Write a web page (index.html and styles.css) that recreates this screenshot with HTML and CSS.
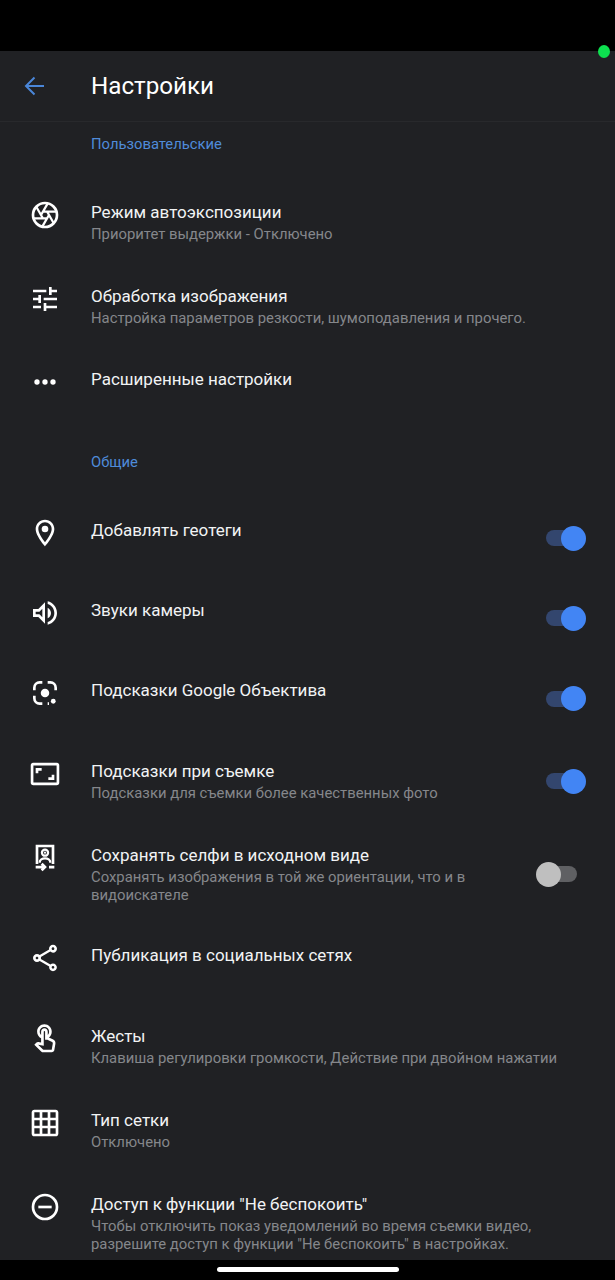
FILE: index.html
```html
<!DOCTYPE html>
<html lang="ru">
<head>
    <meta charset="UTF-8">
    <meta name="viewport" content="width=device-width, initial-scale=1.0">
    <title>Настройки</title>
    <link rel="stylesheet" href="styles.css">
</head>
<body>
    <div class="status-bar"></div>
    <span class="camera-dot"></span>

    <header class="toolbar">
        <svg class="back" viewBox="0 0 24 24"><path d="M21 12H4M11.500 3.500L3 12l8.500 8.500"/></svg>
        <h1>Настройки</h1>
    </header>

    <main class="list">
        <h2 class="section first">Пользовательские</h2>

        <div class="row">
            <svg class="icon" viewBox="0 0 24 24"><circle class="line" cx="12" cy="12" r="9"/><path class="line thin" d="M10.500 9.400H20.600M13.500 9.400L18.550 18.150M15 12L9.950 20.750M13.500 14.600H3.400M10.500 14.600L5.450 5.850M9 12L14.050 3.250"/></svg>
            <div class="text">
                <div class="name">Режим автоэкспозиции</div>
                <div class="sub">Приоритет выдержки - Отключено</div>
            </div>
        </div>

        <div class="row short">
            <svg class="icon" viewBox="0 0 24 24"><path d="M3 17v2h6v-2H3zM3 5v2h10V5H3zm10 16v-2h8v-2h-8v-2h-2v6h2zM7 9v2H3v2h4v2h2V9H7zm14 4v-2H11v2h10zm-6-4h2V7h4V5h-4V3h-2v6z"/></svg>
            <div class="text">
                <div class="name">Обработка изображения</div>
                <div class="sub">Настройка параметров резкости, шумоподавления и прочего.</div>
            </div>
        </div>

        <div class="row wide">
            <svg class="icon" viewBox="0 0 24 24"><circle cx="6" cy="12" r="2"/><circle cx="12" cy="12" r="2"/><circle cx="18" cy="12" r="2"/></svg>
            <div class="text">
                <div class="name">Расширенные настройки</div>
            </div>
        </div>

        <h2 class="section">Общие</h2>

        <div class="row">
            <svg class="icon" viewBox="0 0 24 24"><path d="M12 2C8.130 2 5 5.130 5 9c0 5.250 7 13 7 13s7-7.750 7-13c0-3.870-3.130-7-7-7zM7 9c0-2.760 2.240-5 5-5s5 2.240 5 5c0 2.880-2.880 7.190-5 9.880C9.920 16.210 7 11.850 7 9z"/><circle cx="12" cy="9" r="2.500"/></svg>
            <div class="text">
                <div class="name">Добавлять геотеги</div>
            </div>
            <div class="switch on"><span class="track"></span><span class="thumb"></span></div>
        </div>

        <div class="row">
            <svg class="icon" viewBox="0 0 24 24"><path d="M3 9v6h4l5 5V4L7 9H3zm7-.170v6.340L7.830 13H5v-2h2.830L10 8.830zM16.500 12c0-1.770-1.020-3.290-2.500-4.030v8.050c1.480-.730 2.500-2.250 2.500-4.020zM14 3.230v2.060c2.890.860 5 3.540 5 6.710s-2.110 5.850-5 6.710v2.060c4.010-.910 7-4.490 7-8.770 0-4.280-2.990-7.860-7-8.770z"/></svg>
            <div class="text">
                <div class="name">Звуки камеры</div>
            </div>
            <div class="switch on"><span class="track"></span><span class="thumb"></span></div>
        </div>

        <div class="row wide">
            <svg class="icon" viewBox="0 0 24 24"><path class="line" d="M4 10V8a4 4 0 0 1 4-4h2M14 4h2a4 4 0 0 1 4 4v2M4 14v2a4 4 0 0 0 4 4h2M14 20h1"/><circle cx="12" cy="12" r="3.200"/><circle cx="18.200" cy="18.200" r="1.800"/></svg>
            <div class="text">
                <div class="name">Подсказки Google Объектива</div>
            </div>
            <div class="switch on"><span class="track"></span><span class="thumb"></span></div>
        </div>

        <div class="row">
            <svg class="icon" viewBox="0 0 24 24"><rect class="line" x="2.300" y="4.600" width="19.400" height="14.800" rx="1"/><path class="line" d="M6 11.500V8.500h3.500M18 12.500v3h-3.500"/></svg>
            <div class="text">
                <div class="name">Подсказки при съемке</div>
                <div class="sub">Подсказки для съемки более качественных фото</div>
            </div>
            <div class="switch on"><span class="track"></span><span class="thumb"></span></div>
        </div>

        <div class="row wrap">
            <svg class="icon" viewBox="0 0 24 24"><path class="line" d="M6 16.500V3h12v13.500"/><circle class="line thin" cx="12" cy="8" r="2.300"/><circle cx="12" cy="8" r=".800"/><path class="line thin" d="M8 15.500c0-2 2-3.300 4-3.300s4 1.300 4 3.300"/><path class="line" d="M5 18.800h7M9.500 16.300l2.500 2.500-2.500 2.500M15 18.800h4"/></svg>
            <div class="text">
                <div class="name">Сохранять селфи в исходном виде</div>
                <div class="sub">Сохранять изображения в той же ориентации, что и в видоискателе</div>
            </div>
            <div class="switch"><span class="track"></span><span class="thumb"></span></div>
        </div>

        <div class="row wide">
            <svg class="icon" viewBox="0 0 24 24"><path d="M18 16.080c-.760 0-1.440.300-1.960.770L8.910 12.700c.050-.230.090-.460.090-.700s-.040-.470-.090-.700l7.050-4.110c.540.500 1.250.810 2.040.810 1.660 0 3-1.340 3-3s-1.340-3-3-3-3 1.340-3 3c0 .240.040.470.090.700L8.040 9.810C7.500 9.310 6.790 9 6 9c-1.660 0-3 1.340-3 3s1.340 3 3 3c.790 0 1.500-.310 2.040-.810l7.120 4.160c-.050.210-.080.430-.080.650 0 1.610 1.310 2.920 2.920 2.920s2.920-1.310 2.920-2.920-1.310-2.920-2.920-2.920zM18 4c.550 0 1 .450 1 1s-.450 1-1 1-1-.450-1-1 .450-1 1-1zM6 13c-.550 0-1-.450-1-1s.450-1 1-1 1 .450 1 1-.450 1-1 1zm12 7.020c-.550 0-1-.450-1-1s.450-1 1-1 1 .450 1 1-.450 1-1 1z"/></svg>
            <div class="text">
                <div class="name">Публикация в социальных сетях</div>
            </div>
        </div>

        <div class="row">
            <svg class="icon" viewBox="0 0 24 24"><path d="M18.190 12.440l-3.240-1.620c1.290-1 2.120-2.560 2.120-4.320C17.070 3.470 14.600 1 11.570 1S6.070 3.470 6.070 6.500c0 2.130 1.220 3.980 3 4.890v3.260c-2.150-.460-2.020-.440-2.260-.440-.530 0-1.030.210-1.410.590L4 16.220l5.090 5.090c.430.440 1.030.690 1.650.690h6.300c.980 0 1.810-.700 1.970-1.670l.800-4.710c.220-1.300-.430-2.580-1.620-3.180zm-.350 2.850l-.800 4.710h-6.300c-.090 0-.170-.040-.240-.100l-3.680-3.680 4.250.890V6.500c0-.280.220-.500.500-.500s.500.220.500.500v6h1.760l3.460 1.730c.400.200.620.630.550 1.060zM8.070 6.500c0-1.930 1.570-3.500 3.500-3.500s3.500 1.570 3.500 3.500c0 .950-.380 1.810-1 2.440V6.500c0-1.380-1.120-2.500-2.500-2.500s-2.500 1.120-2.500 2.500v2.440c-.620-.630-1-1.490-1-2.440z"/></svg>
            <div class="text">
                <div class="name">Жесты</div>
                <div class="sub">Клавиша регулировки громкости, Действие при двойном нажатии</div>
            </div>
        </div>

        <div class="row">
            <svg class="icon" viewBox="0 0 24 24"><path d="M20 2H4c-1.100 0-2 .900-2 2v16c0 1.100.900 2 2 2h16c1.100 0 2-.900 2-2V4c0-1.100-.900-2-2-2zM8 20H4v-4h4v4zm0-6H4v-4h4v4zm0-6H4V4h4v4zm6 12h-4v-4h4v4zm0-6h-4v-4h4v4zm0-6h-4V4h4v4zm6 12h-4v-4h4v4zm0-6h-4v-4h4v4zm0-6h-4V4h4v4z"/></svg>
            <div class="text">
                <div class="name">Тип сетки</div>
                <div class="sub">Отключено</div>
            </div>
        </div>

        <div class="row wrap">
            <svg class="icon" viewBox="0 0 24 24"><circle class="line" cx="12" cy="12" r="9"/><path class="line" d="M7 12h10"/></svg>
            <div class="text">
                <div class="name">Доступ к функции "Не беспокоить"</div>
                <div class="sub">Чтобы отключить показ уведомлений во время съемки видео, разрешите доступ к функции "Не беспокоить" в настройках.</div>
            </div>
        </div>
    </main>

    <footer class="nav-bar"><span class="pill"></span></footer>
</body>
</html>
```

FILE: styles.css
```css
html, body {
    height: 100%;
}
body {
    margin: 0;
    overflow: hidden;
    display: flex;
    flex-direction: column;
    position: relative;
    background-color: #202124;
    color: #f1f3f4;
    font-family: Roboto, "Noto Sans", sans-serif;
}
.status-bar {
    height: 51px;
    flex: none;
    background-color: #000;
}
.camera-dot {
    position: absolute;
    left: 598px;
    top: 45px;
    width: 12px;
    height: 13px;
    border-radius: 50%;
    background-color: #0de04f;
}
.toolbar {
    height: 71px;
    flex: none;
    box-sizing: border-box;
    display: flex;
    align-items: center;
    padding-left: 23px;
    border-bottom: 1px solid #28292c;
}
.back {
    width: 24px;
    height: 24px;
    margin-right: 44px;
    fill: none;
    stroke: #4a86d8;
    stroke-width: 2;
}
h1 {
    margin: 0;
    font-size: 24.200px;
    font-weight: 400;
    color: #fff;
}
.list {
    flex: 1;
    min-height: 0;
    overflow: hidden;
}
.section {
    margin: 0 0 18px;
    padding: 32px 0 0 91px;
    font-size: 14.800px;
    font-weight: 400;
    line-height: 20px;
    color: #4f8bd9;
}
.section.first {
    padding-top: 12px;
}
.row {
    min-height: 80px;
    box-sizing: border-box;
    display: flex;
    align-items: center;
    padding: 30px 29px 14px 29px;
}
.row.short {
    padding-bottom: 13px;
}
.row.wide {
    min-height: 81px;
}
.row.wrap {
    padding-bottom: 12px;
}
.icon {
    width: 32px;
    height: 32px;
    flex: none;
    align-self: flex-start;
    margin: -3px 30px 0 0;
    fill: #fff;
}
.icon .line {
    fill: none;
    stroke: #fff;
    stroke-width: 2;
}
.icon .thin {
    stroke-width: 1.700;
}
.text {
    flex: 1;
    min-width: 0;
    align-self: flex-start;
}
.name {
    font-size: 17px;
    line-height: 20px;
}
.sub {
    margin: 3px 0 -1px;
    font-size: 14.850px;
    line-height: 18px;
    color: #85878b;
}
.switch {
    position: relative;
    width: 50px;
    height: 25px;
    flex: none;
    margin-left: 10px;
    display: flex;
    align-items: center;
    justify-content: center;
}
.track {
    width: 31px;
    height: 16px;
    border-radius: 8px;
    background-color: #5f6063;
}
.thumb {
    position: absolute;
    top: 0;
    left: 0;
    width: 25px;
    height: 25px;
    border-radius: 50%;
    background-color: #bfbfbf;
}
.switch.on .track {
    background-color: #33466e;
}
.switch.on .thumb {
    left: 25px;
    background-color: #4285f4;
}
.nav-bar {
    height: 20px;
    flex: none;
    display: flex;
    justify-content: center;
    align-items: flex-start;
    background-color: #000;
}
.pill {
    width: 182px;
    height: 5px;
    margin-top: 7px;
    border-radius: 3px;
    background-color: #fff;
}
```
